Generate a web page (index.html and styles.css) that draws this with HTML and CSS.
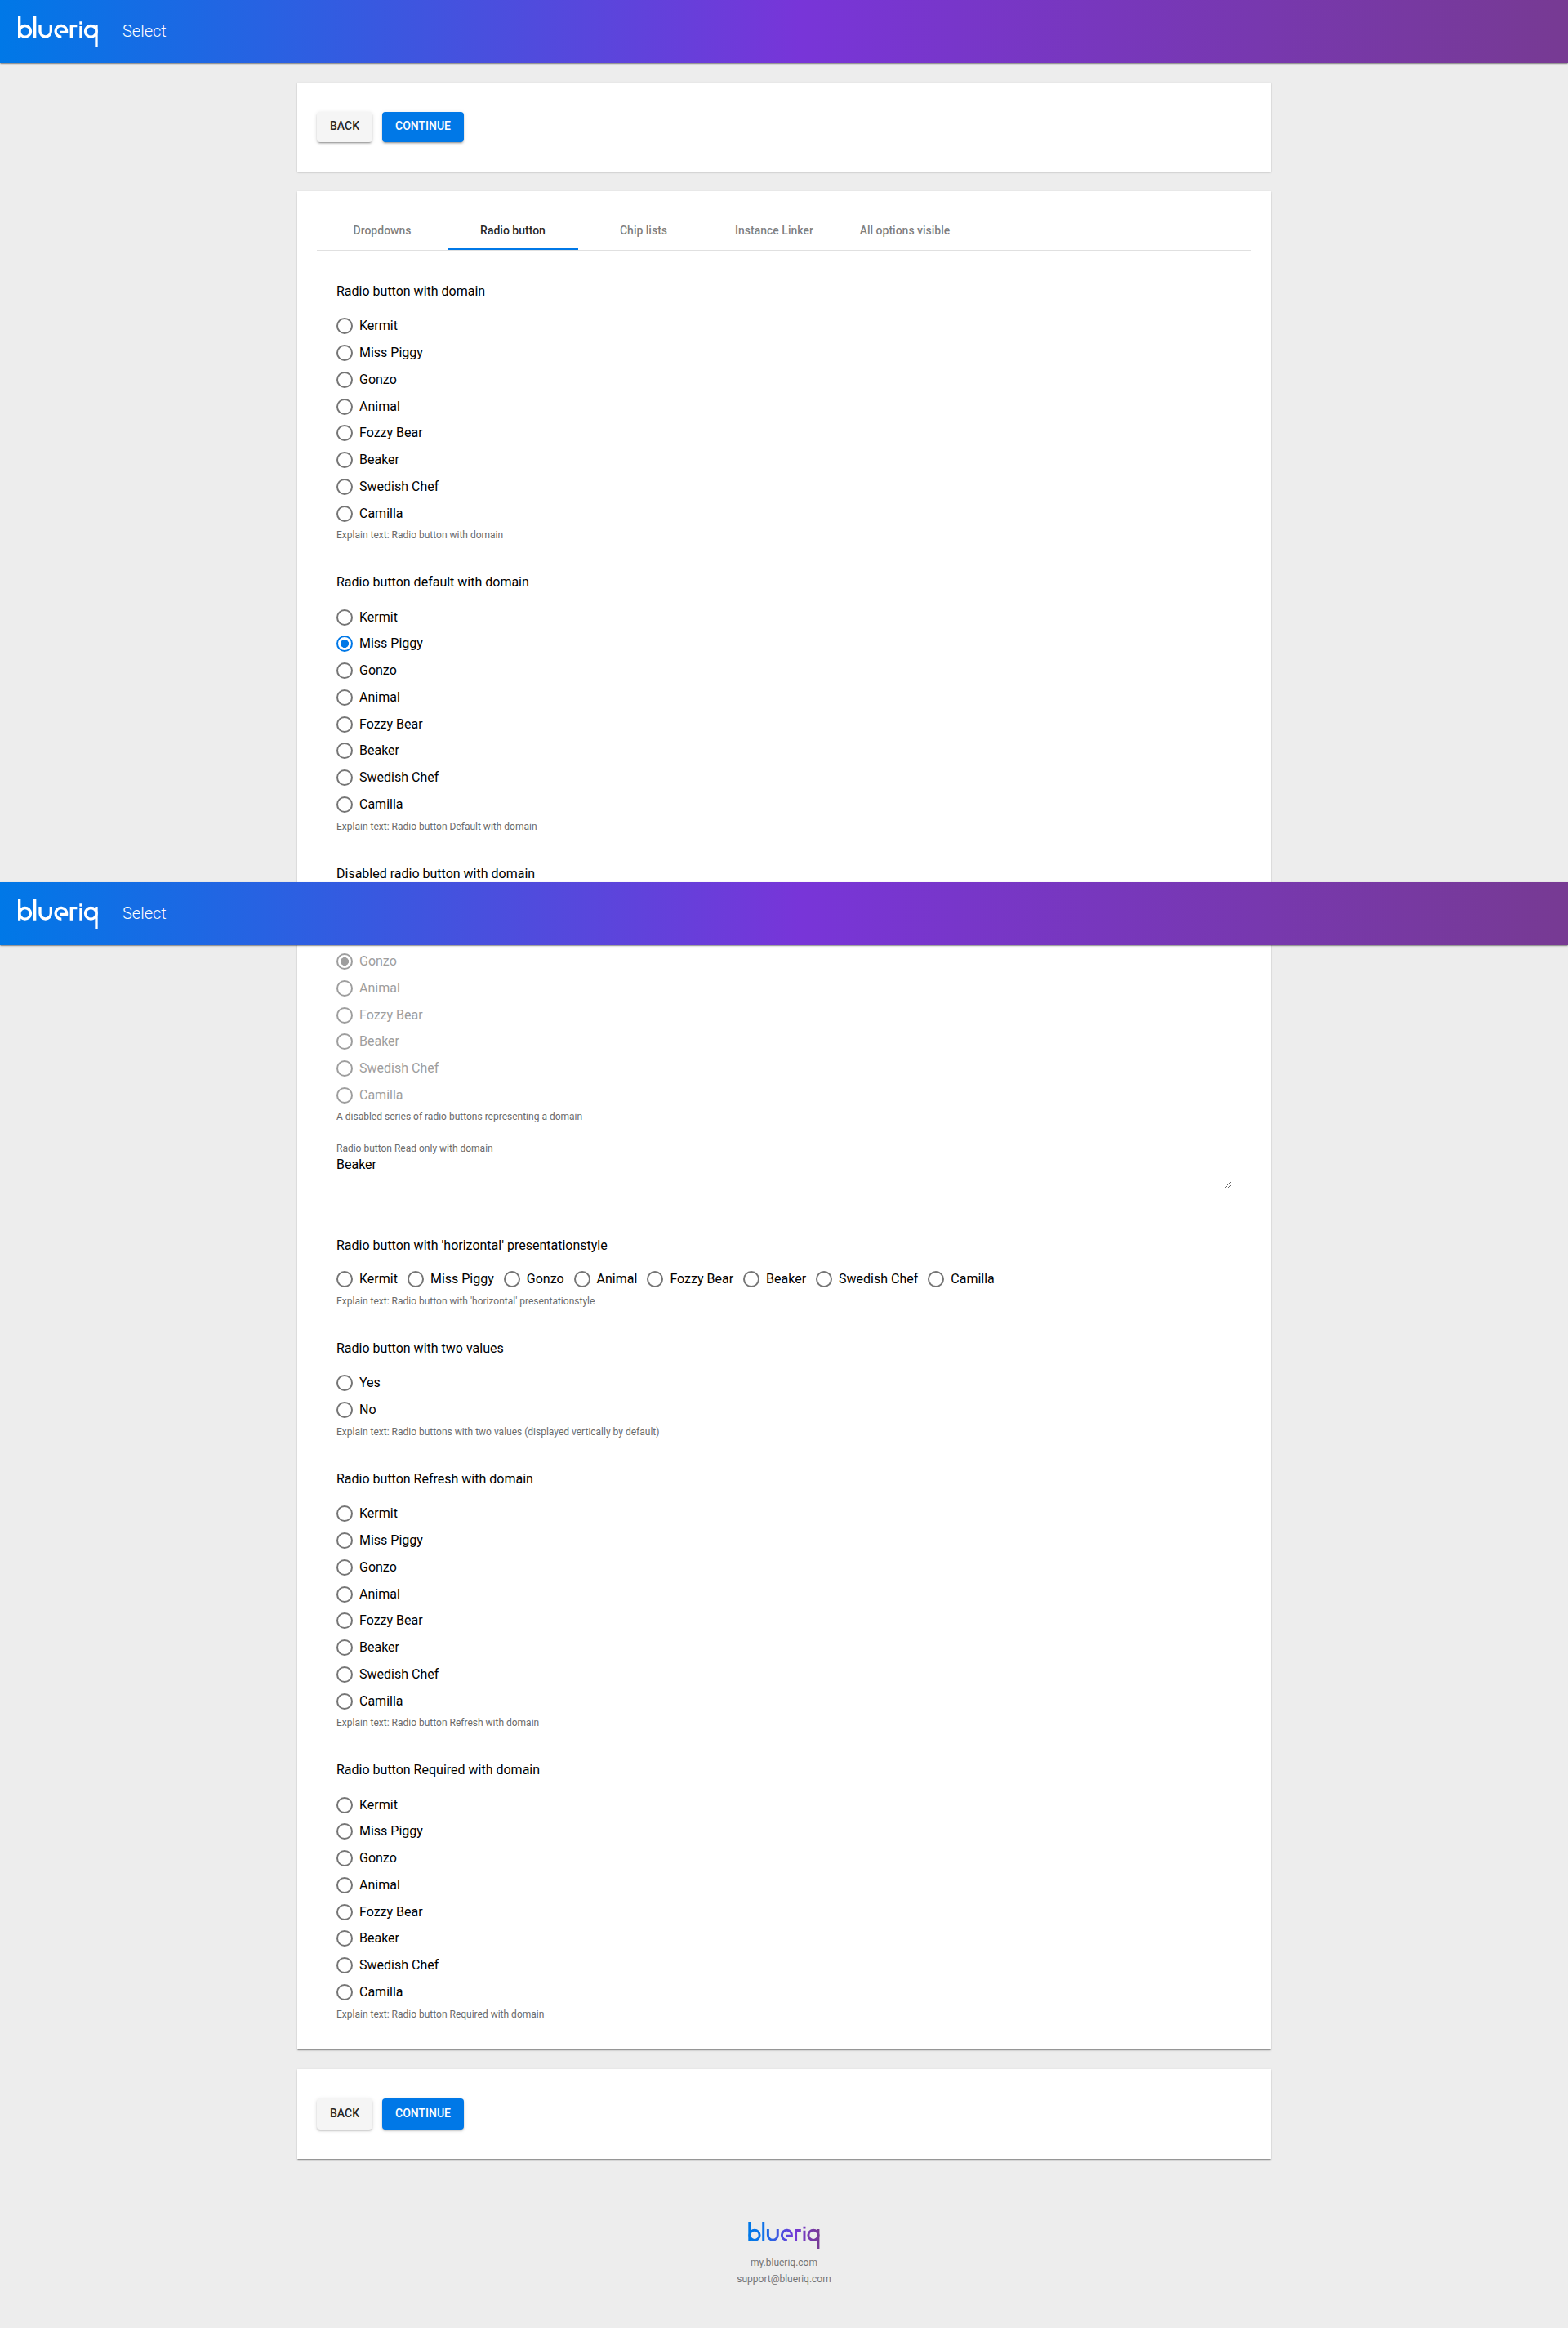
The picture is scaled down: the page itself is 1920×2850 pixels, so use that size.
FILE: index.html
```html
<!DOCTYPE html>
<html lang="en">
<head>
<meta charset="utf-8">
<title>Select</title>
<link rel="stylesheet" href="styles.css">
</head>
<body>
<svg width="0" height="0" class="defs" aria-hidden="true">
  <defs>
    <linearGradient id="brand" gradientUnits="userSpaceOnUse" x1="0" y1="0" x2="294" y2="0">
      <stop offset="0" stop-color="#0078e7"/><stop offset=".2" stop-color="#0f73e8"/><stop offset=".65" stop-color="#7338d8"/><stop offset="1" stop-color="#773a93"/>
    </linearGradient>
    <symbol id="logo" viewBox="0 0 294 111">
      <g fill="none" stroke-width="10">
        <line x1="5" y1="0" x2="5.010" y2="80"/>
        <circle cx="26" cy="55" r="20.5"/>
        <line x1="62" y1="0" x2="62.01" y2="80"/>
        <path d="M81 30V55a20 20 0 0 0 40 0V30"/>
        <path d="M155 58H179A20.500 20.500 0 1 0 160 75.500"/>
        <path d="M196 80V35H217"/>
        <line x1="231" y1="36" x2="231.010" y2="80"/>
        <line x1="231" y1="19" x2="231.010" y2="29"/>
        <circle cx="268" cy="55" r="20.500"/>
        <line x1="288" y1="30" x2="288.010" y2="111"/>
      </g>
    </symbol>
  </defs>
</svg>

<header class="toolbar">
  <svg class="logo" stroke="#fff"><use href="#logo"/></svg>
  <span class="title">Select</span>
</header>
<header class="toolbar toolbar-float">
  <svg class="logo" stroke="#fff"><use href="#logo"/></svg>
  <span class="title">Select</span>
</header>

<main class="page">
  <section class="card actions">
    <button class="btn">BACK</button>
    <button class="btn primary">CONTINUE</button>
  </section>

  <section class="card content">
    <nav class="tabs">
      <a class="tab">Dropdowns</a>
      <a class="tab active">Radio button</a>
      <a class="tab">Chip lists</a>
      <a class="tab">Instance Linker</a>
      <a class="tab">All options visible</a>
    </nav>
    <div class="fields">
      <div class="field">
        <div class="label">Radio button with domain</div>
        <div class="radios">
          <label class="radio"><i></i>Kermit</label>
          <label class="radio"><i></i>Miss Piggy</label>
          <label class="radio"><i></i>Gonzo</label>
          <label class="radio"><i></i>Animal</label>
          <label class="radio"><i></i>Fozzy Bear</label>
          <label class="radio"><i></i>Beaker</label>
          <label class="radio"><i></i>Swedish Chef</label>
          <label class="radio"><i></i>Camilla</label>
        </div>
        <div class="hint">Explain text: Radio button with domain</div>
      </div>
      <div class="field">
        <div class="label">Radio button default with domain</div>
        <div class="radios">
          <label class="radio"><i></i>Kermit</label>
          <label class="radio checked"><i></i>Miss Piggy</label>
          <label class="radio"><i></i>Gonzo</label>
          <label class="radio"><i></i>Animal</label>
          <label class="radio"><i></i>Fozzy Bear</label>
          <label class="radio"><i></i>Beaker</label>
          <label class="radio"><i></i>Swedish Chef</label>
          <label class="radio"><i></i>Camilla</label>
        </div>
        <div class="hint">Explain text: Radio button Default with domain</div>
      </div>
      <div class="field disabled">
        <div class="label">Disabled radio button with domain</div>
        <div class="radios from-third">
          <label class="radio checked"><i></i>Gonzo</label>
          <label class="radio"><i></i>Animal</label>
          <label class="radio"><i></i>Fozzy Bear</label>
          <label class="radio"><i></i>Beaker</label>
          <label class="radio"><i></i>Swedish Chef</label>
          <label class="radio"><i></i>Camilla</label>
        </div>
        <div class="hint">A disabled series of radio buttons representing a domain</div>
      </div>
      <div class="readonly">
        <div class="hint">Radio button Read only with domain</div>
        <textarea readonly>Beaker</textarea>
      </div>
      <div class="field">
        <div class="label">Radio button with 'horizontal' presentationstyle</div>
        <div class="radios horizontal">
          <label class="radio"><i></i>Kermit</label>
          <label class="radio"><i></i>Miss Piggy</label>
          <label class="radio"><i></i>Gonzo</label>
          <label class="radio"><i></i>Animal</label>
          <label class="radio"><i></i>Fozzy Bear</label>
          <label class="radio"><i></i>Beaker</label>
          <label class="radio"><i></i>Swedish Chef</label>
          <label class="radio"><i></i>Camilla</label>
        </div>
        <div class="hint">Explain text: Radio button with 'horizontal' presentationstyle</div>
      </div>
      <div class="field">
        <div class="label">Radio button with two values</div>
        <div class="radios">
          <label class="radio"><i></i>Yes</label>
          <label class="radio"><i></i>No</label>
        </div>
        <div class="hint">Explain text: Radio buttons with two values (displayed vertically by default)</div>
      </div>
      <div class="field">
        <div class="label">Radio button Refresh with domain</div>
        <div class="radios">
          <label class="radio"><i></i>Kermit</label>
          <label class="radio"><i></i>Miss Piggy</label>
          <label class="radio"><i></i>Gonzo</label>
          <label class="radio"><i></i>Animal</label>
          <label class="radio"><i></i>Fozzy Bear</label>
          <label class="radio"><i></i>Beaker</label>
          <label class="radio"><i></i>Swedish Chef</label>
          <label class="radio"><i></i>Camilla</label>
        </div>
        <div class="hint">Explain text: Radio button Refresh with domain</div>
      </div>
      <div class="field">
        <div class="label">Radio button Required with domain</div>
        <div class="radios">
          <label class="radio"><i></i>Kermit</label>
          <label class="radio"><i></i>Miss Piggy</label>
          <label class="radio"><i></i>Gonzo</label>
          <label class="radio"><i></i>Animal</label>
          <label class="radio"><i></i>Fozzy Bear</label>
          <label class="radio"><i></i>Beaker</label>
          <label class="radio"><i></i>Swedish Chef</label>
          <label class="radio"><i></i>Camilla</label>
        </div>
        <div class="hint">Explain text: Radio button Required with domain</div>
      </div>
    </div>
  </section>

  <section class="card actions">
    <button class="btn">BACK</button>
    <button class="btn primary">CONTINUE</button>
  </section>
</main>

<footer class="footer">
  <svg class="logo" stroke="url(#brand)"><use href="#logo"/></svg>
  <span>my.blueriq.com</span>
  <span>support@blueriq.com</span>
</footer>
</body>
</html>
```
FILE: styles.css
```css
* { box-sizing: border-box; }
body {
  margin: 0;
  position: relative;
  height: 2850px;
  background: #ededed;
  font-family: Roboto, "Liberation Sans", sans-serif;
  font-size: 16px;
  color: #000;
}
.defs { display: block; position: absolute; }

.toolbar {
  display: flex;
  align-items: center;
  height: 77px;
  padding-left: 22px;
  background: linear-gradient(90deg, #0078e7 0%, #7835d8 51%, #773a93 100%);
  box-shadow: 0 2px 1px -1px rgba(0,0,0,.2), 0 1px 1px rgba(0,0,0,.14), 0 1px 3px rgba(0,0,0,.12);
}
.toolbar-float { position: absolute; top: 1080px; left: 0; right: 0; }
.toolbar .logo { width: 98px; height: 37px; }
.title { margin-left: 30px; padding-bottom: 2px; font-size: 20px; font-weight: 300; color: #fff; line-height: 32px; }

.page {
  display: flex;
  flex-direction: column;
  gap: 24px;
  width: 1192px;
  margin: 24px auto 0;
}
.card {
  background: #fff;
  box-shadow: 0 2px 1px -1px rgba(0,0,0,.2), 0 1px 1px rgba(0,0,0,.14), 0 1px 3px rgba(0,0,0,.12);
}
.actions { display: flex; gap: 12px; height: 109.400px; padding: 36px 24px; }
.btn {
  height: 37.400px;
  padding: 0 16px 2px;
  border: 0;
  border-radius: 4px;
  background: #f5f5f5;
  color: rgba(0,0,0,.87);
  font: 500 14px/35px Roboto, sans-serif;
  box-shadow: 0 3px 1px -2px rgba(0,0,0,.2), 0 2px 2px rgba(0,0,0,.14), 0 1px 5px rgba(0,0,0,.12);
}
.btn.primary { background: #0078e7; color: #fff; }

.content { height: 2275px; padding: 24px; }
.tabs { display: flex; height: 49px; border-bottom: 1px solid #e0e0e0; }
.tab {
  display: flex;
  align-items: center;
  justify-content: center;
  width: 160px;
  height: 48px;
  font-size: 14px;
  font-weight: 500;
  color: rgba(0,0,0,.52);
}
.tab.active { color: rgba(0,0,0,.87); box-shadow: inset 0 -2px #0078e7; }

.fields { padding: 37.500px 24px 0; }
.field { margin-bottom: 37px; }
.label { height: 24px; line-height: 24px; margin-bottom: 14.100px; }
.radio { display: flex; align-items: center; gap: 8px; height: 32.750px; line-height: 20px; }
.radio i {
  width: 20px;
  height: 20px;
  border: 2px solid #757575;
  border-radius: 50%;
}
.radio.checked i {
  border-color: #0078e7;
  background: radial-gradient(circle, #0078e7 4.700px, transparent 5.300px);
}
.disabled .radio { color: #9e9e9e; }
.disabled .radio i { border-color: #9e9e9e; }
.disabled .radio.checked i { background: radial-gradient(circle, #9e9e9e 4.700px, transparent 5.300px); }
.from-third { padding-top: 65px; }
.horizontal { display: flex; gap: 12px; margin-top: -1px; }
.hint { height: 18px; margin-top: 1.250px; font-size: 12px; line-height: 18px; color: #6b6b6b; }
.readonly { margin-top: -16.500px; height: 116px; }
.readonly textarea {
  display: block;
  width: 100%;
  height: 40px;
  margin: 0;
  padding: 2px 0 0;
  border: 0;
  outline: 0;
  resize: vertical;
  overflow: auto;
  background: transparent;
  font: 16px/18px Roboto, sans-serif;
  color: #000;
}

.footer {
  display: flex;
  flex-direction: column;
  align-items: center;
  width: 1080px;
  margin: 24px auto 0;
  padding-top: 52px;
  border-top: 1px solid #cfcfcf;
  font-size: 12px;
  line-height: 20px;
  color: #757575;
}
.footer .logo { width: 88px; height: 33px; margin-bottom: 7px; }
```
